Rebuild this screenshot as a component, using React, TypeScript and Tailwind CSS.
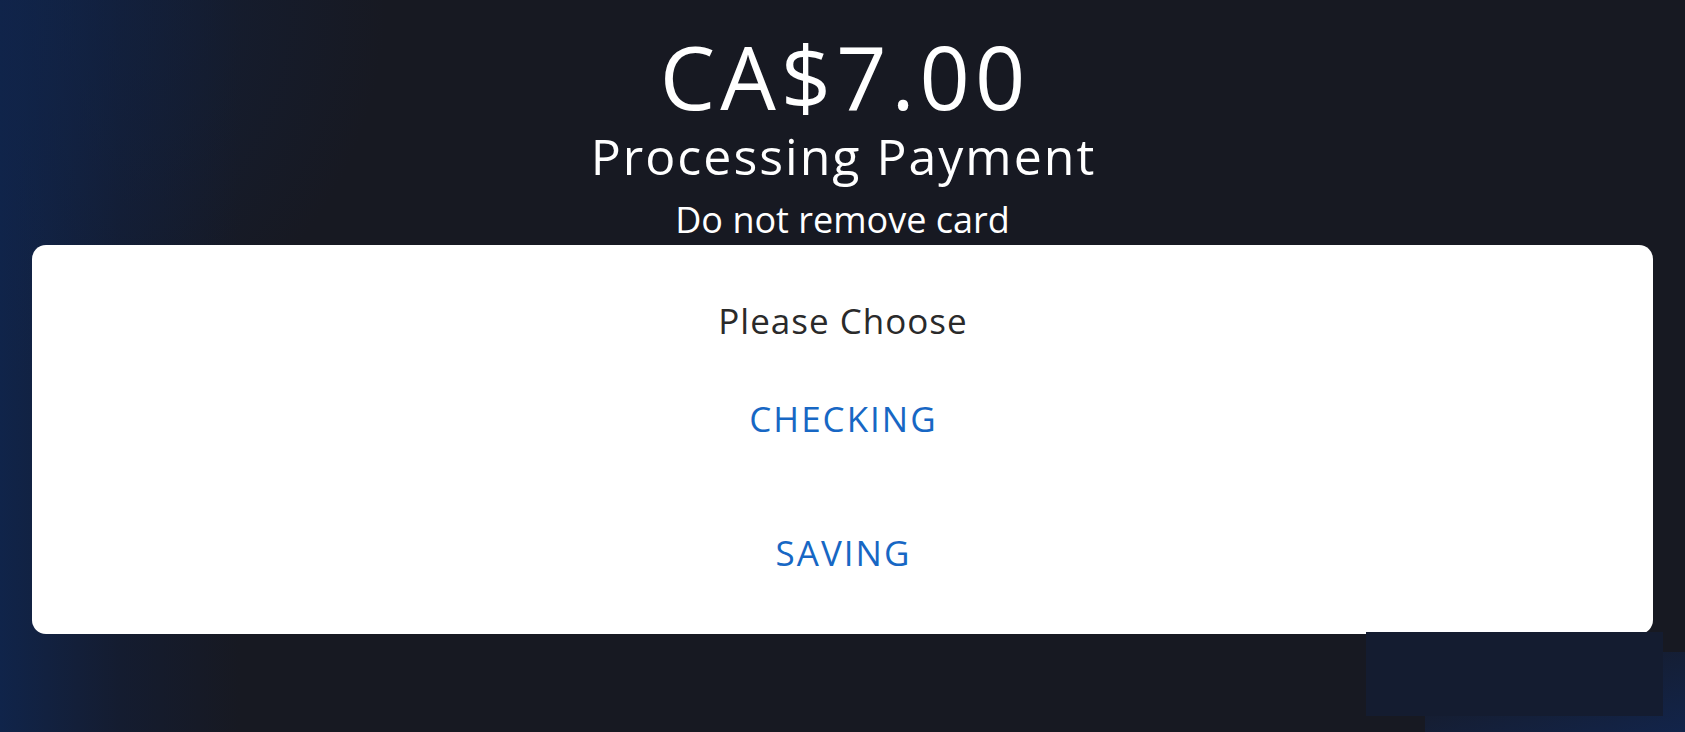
export default function App() {
  return (
    <div
      className="relative h-[732px] w-[1685px] overflow-hidden bg-[#171922]"
      style={{ fontFamily: '"Open Sans", Lato, sans-serif' }}
    >
      {/* left blue glow */}
      <div className="absolute inset-y-0 left-0 w-[240px] bg-gradient-to-r from-[#10244a] via-[#141c30] to-transparent" />
      <div className="absolute left-0 top-0 h-[420px] w-[420px] bg-[radial-gradient(ellipse_at_top_left,rgba(16,36,74,0.7)_0%,transparent_65%)]" />
      <div className="absolute bottom-0 right-0 h-[80px] w-[260px] bg-gradient-to-tl from-[#12244a] to-transparent" />

      <div className="relative flex flex-col items-center pt-[28px]">
        <div className="pl-[5px] text-[88px] leading-[96px] tracking-[5px] text-white">CA$7.00</div>
        <div className="mt-[4px] pl-[2px] text-[50px] leading-[56px] tracking-[2px] text-white">Processing Payment</div>
        <div className="mt-[14px] text-[36px] leading-[44px] text-white">Do not remove card</div>
      </div>

      <div className="relative mx-[32px] mt-[3px] flex h-[389px] flex-col items-center rounded-[14px] bg-white">
        <div className="mt-[54px] pl-[1px] text-[35px] leading-[44px] tracking-[1px] text-[#2a2a2a]">Please Choose</div>
        <button className="mt-[54px] pl-[2px] text-[35px] leading-[44px] tracking-[2px] text-[#1767c4]">CHECKING</button>
        <button className="mt-[90px] pl-[2px] text-[35px] leading-[44px] tracking-[2px] text-[#1767c4]">SAVING</button>
      </div>

      {/* overlay patch bottom right */}
      <div className="absolute left-[1366px] top-[632px] h-[84px] w-[297px] bg-[#141c30]" />
    </div>
  );
}
